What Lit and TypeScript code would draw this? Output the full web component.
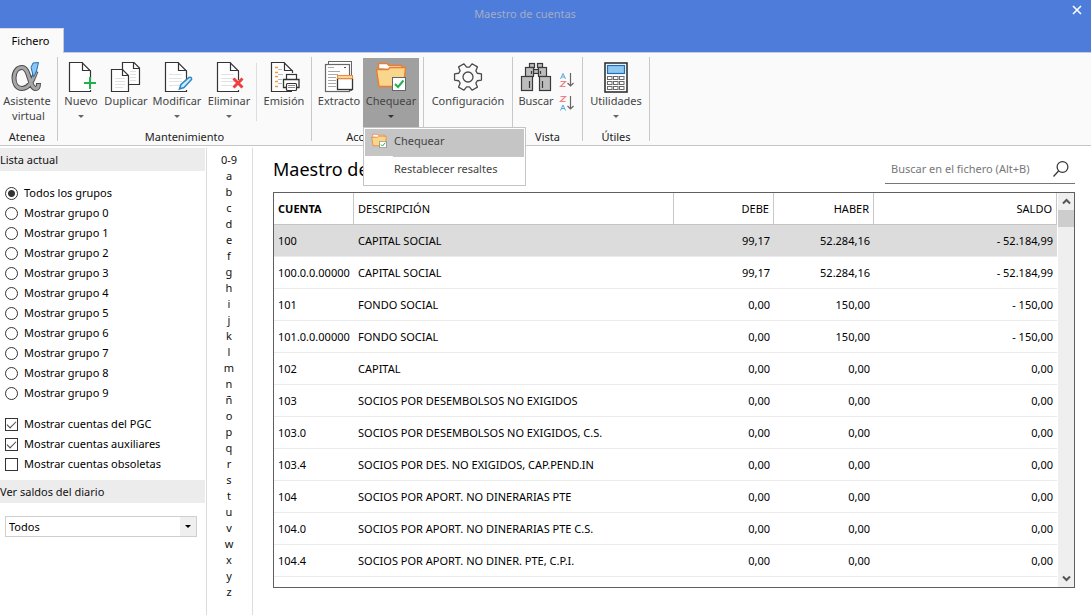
import { LitElement, html, css, svg, nothing } from "lit";
import { customElement, property, state } from "lit/decorators.js";
import { classMap } from "lit/directives/class-map.js";

const pageLines = svg`<path d="M8 13.5h13M8 17.5h13M8 20.5h13M8 24.5h11" stroke="#e2e2e2" fill="none"/>`;
const page = svg`
  <path d="M25.5 19V10L17 1.5H4.5V30.5H25.5V29" fill="#fff" stroke="#333" stroke-width="1.2"/>
  <path d="M17.5 1.5V9.5H25.5" fill="none" stroke="#333" stroke-width="1.2"/>`;
const folder = svg`
  <path d="M3.5 7V2.5H12L14 4.5H26.5V9" fill="#fff" stroke="#ee7d2b" stroke-width="1.4"/>
  <path d="M4 25.500L1.500 8.500H13L15 6.500H30.500L28.500 25.500Z" fill="#f8d68b" stroke="#ee7d2b" stroke-width="1.400"/>
  <rect x="17.500" y="16.500" width="13" height="13" fill="#fff" stroke="#666"/>
  <path d="M20 23L23 26L28.500 19.500" fill="none" stroke="#21b14c" stroke-width="2"/>`;

// Six-toothed cog outline centred in a 32 unit box.
const gearPath = (() => {
  const at = (r: number, deg: number) => {
    const a = (deg * Math.PI) / 180;
    return `${(16 + r * Math.cos(a)).toFixed(2)} ${(16 + r * Math.sin(a)).toFixed(2)}`;
  };
  const pts: string[] = [];
  for (let k = 0; k < 6; k++) {
    const c = k * 60;
    pts.push(at(10, c - 22), at(13.8, c - 13), at(13.8, c + 13), at(10, c + 22));
  }
  return `M${pts.join("L")}Z`;
})();

const icons: Record<string, unknown> = {
  alpha: svg`
    <path d="M25 10C22 18 19 27 11 27.500C5 27.500 3 21.500 3 17C3 10.500 6.500 6.500 11 6.500C19 6.500 18 27 24.500 27.500C27 27.500 27.500 25.500 27.500 22" fill="none" stroke="#4b4b4b" stroke-width="5"/>
    <path d="M25 11C22 18 19 27 11 27.500C5 27.500 3 21.500 3 17C3 10.500 6.500 6.500 11 6.500C19 6.500 18 27 24.500 27.500C27 27.500 27.500 25.500 27.500 23" fill="none" stroke="#a6a6a6" stroke-width="3"/>
    <path d="M22.500 16L20 6.500L22 2L27.500 1.500L25.500 10Z" fill="#8cc6f4" stroke="#1f70b5"/>`,
  nuevo: svg`${page}<path d="M19 22H31M25 16V28" stroke="#21b14c" stroke-width="2" fill="none"/>`,
  duplicar: svg`
    <path d="M12.500 1.500H24L29.500 7V23.500H12.500Z" fill="#fff" stroke="#333" stroke-width="1.200"/>
    <path d="M23.500 1.500V7.500H29.500" fill="none" stroke="#333" stroke-width="1.200"/>
    <path d="M20 10.500H26M20 13.500H26M20 16.500H26M20 19.500H26" stroke="#e2e2e2"/>
    <path d="M1.500 8.500H12.500L18.500 14.500V30.500H1.500Z" fill="#fff" stroke="#333" stroke-width="1.200"/>
    <path d="M12.500 8.500V14.500H18.500" fill="none" stroke="#333" stroke-width="1.200"/>
    <path d="M5 17.500H15M5 20.500H15M5 23.500H15M5 26.500H13" stroke="#e2e2e2"/>`,
  modificar: svg`${page}${pageLines}
    <path d="M18.500 28L20 23.500L28 16.500Q31 15.500 30.500 18.500L23 26.500Z" fill="#d6ebfa" stroke="#2c8ac9" stroke-width="1.600"/>`,
  eliminar: svg`${page}${pageLines}<path d="M20.500 17.500L29.500 26.500M29.500 17.500L20.500 26.500" stroke="#ef3e3e" stroke-width="3" fill="none"/>`,
  emision: svg`
    <path d="M24.500 12V10L16 1.500H3.500V30.500H24" fill="#fff" stroke="#333" stroke-width="1.200"/>
    <path d="M16.500 1.500V9.500H24.500" fill="none" stroke="#333" stroke-width="1.200"/>
    <path d="M7 6.500h3M7 11.500h3M7 15.500h3M7 20.500h3M7 25.500h3" stroke="#f09a3e" stroke-width="1.400"/>
    <path d="M10 8.500h4M10 13.500h5M10 18.500h4M10 22.500h4" stroke="#bbb"/>
    <rect x="18.500" y="13.500" width="10" height="6" fill="#fff" stroke="#333" stroke-width="1.200"/>
    <path d="M15.500 18.500H31V26.500H15.500Z" fill="#fff" stroke="#333" stroke-width="1.300"/>
    <rect x="18.500" y="22.500" width="10" height="7" rx="1" fill="#fff" stroke="#333" stroke-width="1.200"/>
    <path d="M20 24.500H27M20 26.500H27" stroke="#888"/>`,
  extracto: svg`
    <rect x="5.500" y="0.500" width="23" height="29" fill="#fff" stroke="#666"/>
    <rect x="2.500" y="3.500" width="24" height="27" fill="#fff" stroke="#666" stroke-width="1.200"/>
    <path d="M5 6.500H11M5 10.500H17M5 13.500H15M5 16.500H13M5 19.500H13M5 22.500H13M5 25.500H13" stroke="#aaa"/>
    <path d="M21 6.500H23" stroke="#555"/>
    <rect x="14.500" y="17.500" width="15" height="11" fill="#fff" stroke="#333" stroke-width="1.300"/>
    <rect x="14.500" y="14.500" width="15" height="3" fill="#fbd49a" stroke="#ee8a33"/>`,
  folder,
  gear: svg`
    <path d=${gearPath} fill="none" stroke="#4a4a4a" stroke-width="1.300" stroke-linejoin="round"/>
    <circle cx="16" cy="16" r="5" fill="none" stroke="#4a4a4a" stroke-width="1.300"/>`,
  buscar: svg`
    <g fill="#bdbdbd" stroke="#3a3a3a" stroke-width="1.200">
      <rect x="9.500" y="2.500" width="5" height="4"/><rect x="17.500" y="2.500" width="5" height="4"/>
      <rect x="13.500" y="8.500" width="5" height="4"/>
      <rect x="5.500" y="6.500" width="8" height="9"/><rect x="18.500" y="6.500" width="8" height="9"/>
      <rect x="1.500" y="15.500" width="11" height="14"/><rect x="19.500" y="15.500" width="11" height="14"/>
      <path d="M9.500 20V27M22.500 20V27M11.500 10V13M20.500 10V13" fill="none"/>
    </g>`,
  calc: svg`
    <rect x="5" y="2" width="22" height="29" fill="#fff" stroke="#333" stroke-width="1.600"/>
    <rect x="7.500" y="4.500" width="17" height="8" fill="#90c8f2" stroke="#1f6fb8" stroke-width="1.200"/>
    <g fill="#fff" stroke="#6a6a6a">
      ${[7.5, 13.5, 19.5].map((x) => [15.5, 20.5, 25.5].map((y) => svg`<rect x=${x} y=${y} width="4.500" height="3"/>`))}
    </g>`,
};

const sortIcon = (up: boolean) => html`<svg width="16" height="16" viewBox="0 0 16 16" fill="none" aria-hidden="true">
  <path transform=${up ? "translate(0 0)" : "translate(0 8.500)"} d="M1.500 7L4 1.500L6.500 7M2.300 5H5.700" stroke="#5ba7dc"/>
  <path transform=${up ? "translate(0 8)" : "translate(0 0)"} d="M1.500 1.500H6.500L1.500 6.500H6.500" stroke="#f07f86" stroke-width="1.200"/>
  <path d="M11.500 1V14M8.500 11L11.500 14L14.500 11" stroke="#666" stroke-width="1.200"/></svg>`;

@customElement("ribbon-button")
class RibbonButton extends LitElement {
  @property() icon = "";
  @property() label = "";
  @property({ type: Boolean }) arrow = false;
  @property({ type: Boolean, reflect: true }) active = false;

  static styles = css`
    :host { display: block; }
    button {
      display: flex; flex-direction: column; align-items: center;
      width: 100%; height: 69px; padding: 3px 0 0; border: 0; background: none;
      font: 11px/15px "Noto Sans", sans-serif; color: #444; cursor: pointer;
    }
    :host([active]) button { background: #a0a0a0; }
    svg { flex: none; }
    .label { white-space: pre; }
    .arrow { margin-top: 7px; border: 3px solid transparent; border-top-color: #666; border-bottom: 0; }
    :host([active]) .arrow { border-top-color: #333; }
  `;

  render() {
    return html`<button type="button" aria-expanded=${this.arrow ? String(this.active) : nothing}>
      <svg width="32" height="32" viewBox="0 0 32 32" aria-hidden="true">${icons[this.icon]}</svg>
      <span class="label">${this.label}</span>
      ${this.arrow ? html`<span class="arrow"></span>` : nothing}
    </button>`;
  }
}

type Row = [string, string, string, string, string];

@customElement("app-root")
class AppRoot extends LitElement {
  @state() private selected = "100";

  private rows: Row[] = [
    ["100", "CAPITAL SOCIAL", "99,17", "52.284,16", "- 52.184,99"],
    ["100.0.0.00000", "CAPITAL SOCIAL", "99,17", "52.284,16", "- 52.184,99"],
    ["101", "FONDO SOCIAL", "0,00", "150,00", "- 150,00"],
    ["101.0.0.00000", "FONDO SOCIAL", "0,00", "150,00", "- 150,00"],
    ["102", "CAPITAL", "0,00", "0,00", "0,00"],
    ["103", "SOCIOS POR DESEMBOLSOS NO EXIGIDOS", "0,00", "0,00", "0,00"],
    ["103.0", "SOCIOS POR DESEMBOLSOS NO EXIGIDOS, C.S.", "0,00", "0,00", "0,00"],
    ["103.4", "SOCIOS POR DES. NO EXIGIDOS, CAP.PEND.IN", "0,00", "0,00", "0,00"],
    ["104", "SOCIOS POR APORT. NO DINERARIAS PTE", "0,00", "0,00", "0,00"],
    ["104.0", "SOCIOS POR APORT. NO DINERARIAS PTE C.S.", "0,00", "0,00", "0,00"],
    ["104.4", "SOCIOS POR APORT. NO DINER. PTE, C.P.I.", "0,00", "0,00", "0,00"],
  ];

  static styles = css`
    :host {
      display: flex; flex-direction: column; height: 100vh; overflow: hidden;
      background: #fff; color: #000; font: 11px/16px "Noto Sans", sans-serif;
    }
    *, *::before { box-sizing: border-box; }
    button, input, select { font: inherit; color: inherit; margin: 0; }

    .titlebar { display: grid; grid-template-columns: 1fr 41px; height: 28px; background: #4d7cdb; flex: none; }
    .caption { text-align: center; color: #a3acc4; line-height: 28px; }
    .close { justify-self: end; width: 28px; height: 20px; padding: 0; border: 0; background: none; }
    .close svg { display: block; margin: 0 auto; }
    .tabs { display: flex; flex: none; background: #4d7cdb; height: 25px; box-shadow: inset 0 -1px #c6cbd6; }
    .tab { width: 64px; padding: 0 2px 0 0; border: 0; border-top: 1px solid #dcdcdc; border-right: 1px solid #c6cbd6; background: #fafafa; }

    .ribbon { display: flex; flex: none; height: 93px; background: #fafafa; border-bottom: 1px solid #c6c6c6; }
    .divider { width: 1px; margin: 4px 0; background: #c8c8c8; }
    .group { display: flex; flex-direction: column; padding-top: 5px; }
    .group.lead { padding-left: 3px; }
    .group.trail { padding-right: 3px; }
    .tools { display: flex; }
    .group-name { margin-top: 2px; line-height: 15px; text-align: center; color: #222; }
    .thin { width: 1px; height: 58px; margin: 5px 0 0 4px; background: #dedede; }
    .w44 { width: 44px; } .w46 { width: 46px; } .w48 { width: 48px; } .w54 { width: 54px; }
    .w56 { width: 56px; } .w58 { width: 58px; } .w66 { width: 66px; } .w88 { width: 88px; }
    .menu-host { position: relative; margin-right: 4px; }
    .menu {
      position: absolute; z-index: 2; top: 69px; left: 0; width: 163px; padding: 1px;
      background: #fff; border: 1px solid #c4c4c4;
    }
    .menu button {
      display: flex; align-items: center; width: 100%; height: 27px; padding: 0 0 4px; border: 0;
      background: none; color: #444; text-align: left;
    }
    .menu button.hot { background: #c5c5c5; }
    .menu-icon { display: flex; justify-content: center; width: 29px; padding-right: 2px; }
    .menu hr { margin: 0 0 0 28px; border: 0; height: 1px; background: #c8c8c8; }
    .sorts { display: flex; flex-direction: column; gap: 7px; width: 23px; padding: 14px 0 0; }
    .sorts button { width: 16px; height: 16px; padding: 0; border: 0; background: none; }
    .sorts svg { display: block; }

    .body { display: flex; flex: 1; min-height: 0; padding-top: 2px; }
    .side { width: 207px; flex: none; border-right: 1px solid #dcdcdc; }
    h2 { margin: 0 1px 0 0; font: inherit; line-height: 23px; background: #ececec; color: #111; }
    fieldset { margin: 0; padding: 0 5px; border: 0; }
    .radios { margin-top: 12px; }
    .checks { margin: 11px 0 6px; }
    label.opt { display: flex; align-items: center; gap: 6px; height: 20px; }
    .opt input { appearance: none; width: 13px; height: 13px; border: 1px solid #333; background: #fff; }
    .opt input[type="radio"] { border-radius: 50%; }
    .opt input[type="radio"]:checked { background: radial-gradient(circle, #333 3px, #fff 4px); }
    .opt input[type="checkbox"]:checked::before {
      content: ""; display: block; width: 9px; height: 5px; margin: 2px 0 0 1px;
      border: solid #444; border-width: 0 0 1px 1px; transform: rotate(-45deg);
    }
    .combo { display: flex; align-items: center; height: 21px; margin: 13px 9px 0 5px; border: 1px solid #cfcfcf; }
    .combo select {
      appearance: none; width: 100%; height: 19px; padding: 0 0 0 3px; border: 0; border-radius: 0;
      background: conic-gradient(#efefef 0 0) right / 16px 100% no-repeat;
    }
    .combo-box { display: grid; flex: 1; align-items: center; justify-items: end; }
    .combo-box > * { grid-area: 1 / 1; }
    .down { margin-right: 5px; border: 3px solid transparent; border-top-color: #000; border-bottom: 0; pointer-events: none; }

    .index { display: flex; flex-direction: column; width: 46px; flex: none; padding: 4px 1px 0 0; border-right: 1px solid #dcdcdc; text-align: center; }
    .index a { height: 16px; color: #111; text-decoration: none; }

    .main { display: flex; flex-direction: column; flex: 1; min-width: 0; padding: 0 16px 27px 20px; }
    .head { display: flex; justify-content: space-between; height: 44px; flex: none; }
    h1 { margin: 0; font-size: 18px; font-weight: 400; line-height: 43px; white-space: nowrap; }
    .search { display: flex; align-items: center; width: 190px; height: 28px; margin-top: 8px; padding: 0 6px 1px; border-bottom: 1px solid #777; }
    .search input { flex: 1; min-width: 0; padding: 0; border: 0; outline: 0; background: none; }
    .search input::placeholder { color: #777; opacity: 1; }

    .grid { display: flex; flex: 1; min-height: 0; border: 1px solid #5f5f5f; }
    .scroll { flex: 1; overflow: hidden; margin-right: 1px; }
    table { width: 100%; border-collapse: separate; border-spacing: 0; table-layout: fixed; }
    th, td { height: 32px; padding: 0 4px; text-align: left; white-space: nowrap; border-bottom: 1px solid #ebebeb; }
    th { font-weight: 400; border-right: 1px solid #c8c8c8; border-bottom-color: #c4c4c4; }
    th.sorted { font-weight: 700; }
    .num { text-align: right; }
    tr.sel td { background: #dcdcdc; }
    .bar { display: flex; flex-direction: column; width: 16px; flex: none; background: #efefef; }
    .bar button { display: grid; place-items: center; height: 17px; padding: 0; border: 0; background: none; }
    .thumb { height: 17px; background: #cdcdcd; }
    .track { flex: 1; }
  `;

  private option(type: string, text: string, checked = false) {
    return html`<label class="opt"><input type=${type} name=${type === "radio" ? "grupo" : text} .checked=${checked} />${text}</label>`;
  }

  private chevron(d: string) {
    return html`<svg width="9" height="7" viewBox="0 0 9 7" aria-hidden="true"><path d=${d} fill="none" stroke="#555" stroke-width="2"/></svg>`;
  }

  render() {
    return html`
      <header class="titlebar">
        <span class="caption">Maestro de cuentas</span>
        <button class="close" aria-label="Cerrar"><svg width="10" height="10" viewBox="0 0 10 10"><path d="M1 1L9 9M9 1L1 9" stroke="#fff" stroke-width="1.600"/></svg></button>
      </header>
      <div class="tabs"><button class="tab">Fichero</button></div>

      <div class="ribbon">
        <div class="group trail">
          <div class="tools"><ribbon-button class="w54" icon="alpha" label=${"Asistente\n virtual"}></ribbon-button></div>
          <div class="group-name">Atenea</div>
        </div>
        <span class="divider"></span>
        <div class="group">
          <div class="tools">
            <ribbon-button class="w46" icon="nuevo" label="Nuevo" arrow></ribbon-button>
            <ribbon-button class="w44" icon="duplicar" label="Duplicar"></ribbon-button>
            <ribbon-button class="w58" icon="modificar" label="Modificar" arrow></ribbon-button>
            <ribbon-button class="w46" icon="eliminar" label="Eliminar" arrow></ribbon-button>
            <span class="thin"></span>
            <ribbon-button class="w54" icon="emision" label="Emisión"></ribbon-button>
          </div>
          <div class="group-name">Mantenimiento</div>
        </div>
        <span class="divider"></span>
        <div class="group lead">
          <div class="tools">
            <ribbon-button class="w48" icon="extracto" label="Extracto"></ribbon-button>
            <div class="menu-host w56">
              <ribbon-button icon="folder" label="Chequear" arrow active></ribbon-button>
              <div class="menu">
                <button class="hot"><span class="menu-icon"><svg width="16" height="16" viewBox="0 0 32 32" aria-hidden="true">${folder}</svg></span>Chequear</button>
                <hr />
                <button><span class="menu-icon"></span>Restablecer resaltes</button>
              </div>
            </div>
          </div>
          <div class="group-name">Acciones</div>
        </div>
        <span class="divider"></span>
        <div class="group">
          <div class="tools"><ribbon-button class="w88" icon="gear" label="Configuración"></ribbon-button></div>
        </div>
        <span class="divider"></span>
        <div class="group">
          <div class="tools">
            <ribbon-button class="w46" icon="buscar" label="Buscar"></ribbon-button>
            <div class="sorts">
              <button aria-label="Orden ascendente">${sortIcon(true)}</button>
              <button aria-label="Orden descendente">${sortIcon(false)}</button>
            </div>
          </div>
          <div class="group-name">Vista</div>
        </div>
        <span class="divider"></span>
        <div class="group">
          <div class="tools"><ribbon-button class="w66" icon="calc" label="Utilidades" arrow></ribbon-button></div>
          <div class="group-name">Útiles</div>
        </div>
        <span class="divider"></span>
      </div>

      <div class="body">
        <aside class="side">
          <h2>Lista actual</h2>
          <fieldset class="radios" aria-label="Grupos">
            ${this.option("radio", "Todos los grupos", true)}
            ${Array.from({ length: 10 }, (_, i) => this.option("radio", `Mostrar grupo ${i}`))}
          </fieldset>
          <fieldset class="checks" aria-label="Cuentas">
            ${this.option("checkbox", "Mostrar cuentas del PGC", true)}
            ${this.option("checkbox", "Mostrar cuentas auxiliares", true)}
            ${this.option("checkbox", "Mostrar cuentas obsoletas")}
          </fieldset>
          <h2 id="saldos">Ver saldos del diario</h2>
          <div class="combo"><div class="combo-box">
            <select aria-labelledby="saldos"><option>Todos</option></select><span class="down"></span>
          </div></div>
        </aside>

        <nav class="index">
          ${["0-9", ..."abcdefghijklmnñopqrstuvwxyz"].map((c) => html`<a href="#${c}">${c}</a>`)}
        </nav>

        <main class="main">
          <div class="head">
            <h1>Maestro de cuentas</h1>
            <div class="search">
              <input type="text" aria-label="Buscar en el fichero" placeholder="Buscar en el fichero (Alt+B)" />
              <svg width="16" height="16" viewBox="0 0 16 16" fill="none" stroke="#333" stroke-width="1.200" aria-hidden="true"><circle cx="9.500" cy="6" r="5.400"/><path d="M5.500 10L0.500 15.500"/></svg>
            </div>
          </div>
          <div class="grid">
            <div class="scroll">
              <table>
                <colgroup><col style="width:80px" /><col style="width:320px" /><col style="width:100px" /><col style="width:100px" /><col /></colgroup>
                <thead><tr>
                  <th class="sorted">CUENTA</th><th>DESCRIPCIÓN</th>
                  <th class="num">DEBE</th><th class="num">HABER</th><th class="num">SALDO</th>
                </tr></thead>
                <tbody>
                  ${this.rows.map((r) => html`<tr class=${classMap({ sel: r[0] === this.selected })} @click=${() => (this.selected = r[0])}>
                    ${r.map((v, i) => html`<td class=${classMap({ num: i > 1 })}>${v}</td>`)}
                  </tr>`)}
                </tbody>
              </table>
            </div>
            <div class="bar">
              <button aria-label="Subir">${this.chevron("M1 5.500L4.500 2L8 5.500")}</button>
              <div class="thumb"></div>
              <div class="track"></div>
              <button aria-label="Bajar">${this.chevron("M1 1.500L4.500 5L8 1.500")}</button>
            </div>
          </div>
        </main>
      </div>`;
  }
}
